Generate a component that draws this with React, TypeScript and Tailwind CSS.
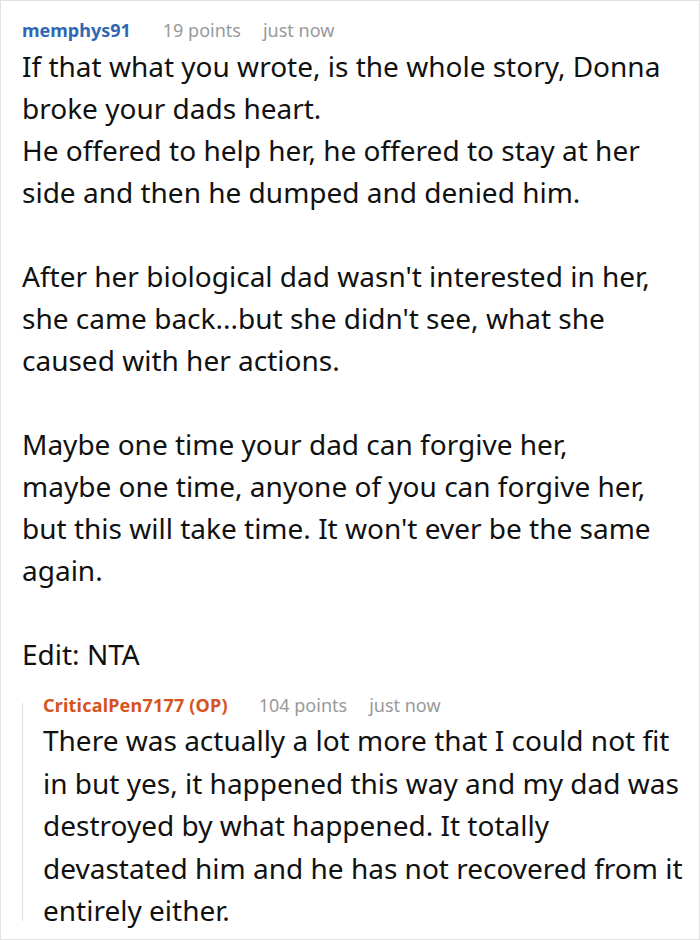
import { FC } from "react";

type MetaProps = {
  name: string;
  nameColor: string;
  points: string;
  gap: string;
};

const font = { fontFamily: '"Noto Sans", "Open Sans", sans-serif' };

const Meta: FC<MetaProps> = ({ name, nameColor, points, gap }) => (
  <div className="flex h-[34px] items-center whitespace-nowrap text-[18px]">
    <span className={`font-bold ${nameColor}`}>{name}</span>
    <span className={`${gap} text-[#999999]`}>{points}</span>
    <span className="ml-[22px] text-[#999999]">just now</span>
  </div>
);

const App = () => {
  return (
    <div
      className="h-[940px] w-[700px] overflow-hidden border border-[#e2e2e2] bg-white text-[#111111]"
      style={font}
    >
      <div className="pl-[21px] pt-[12px]">
        <Meta
          name="memphys91"
          nameColor="text-[#3166b5]"
          points="19 points"
          gap="ml-[32px]"
        />
        <div className="-mt-[2px] whitespace-nowrap text-[28px] leading-[42px]">
          <p>
            If that what you wrote, is the whole story, Donna
            <br />
            broke your dads heart.
            <br />
            He offered to help her, he offered to stay at her
            <br />
            side and then he dumped and denied him.
          </p>
          <br />
          <p>
            After her biological dad wasn't interested in her,
            <br />
            she came back...but she didn't see, what she
            <br />
            caused with her actions.
          </p>
          <br />
          <p>
            Maybe one time your dad can forgive her,
            <br />
            maybe one time, anyone of you can forgive her,
            <br />
            but this will take time. It won't ever be the same
            <br />
            again.
          </p>
          <br />
          <p>Edit: NTA</p>
        </div>

        <div className="mt-[13px] flex">
          <div className="mt-[15px] h-[218px] w-px bg-[#e0e0e0]" />
          <div className="ml-[20px]">
            <Meta
              name="CriticalPen7177 (OP)"
              nameColor="text-[#d5531c] tracking-[0.2px]"
              points="104 points"
              gap="ml-[31px]"
            />
            <p className="-mt-[3px] whitespace-nowrap text-[28px] leading-[42.5px]">
              There was actually a lot more that I could not fit
              <br />
              in but yes, it happened this way and my dad was
              <br />
              destroyed by what happened. It totally
              <br />
              devastated him and he has not recovered from it
              <br />
              entirely either.
            </p>
          </div>
        </div>
      </div>
    </div>
  );
};

export default App;
